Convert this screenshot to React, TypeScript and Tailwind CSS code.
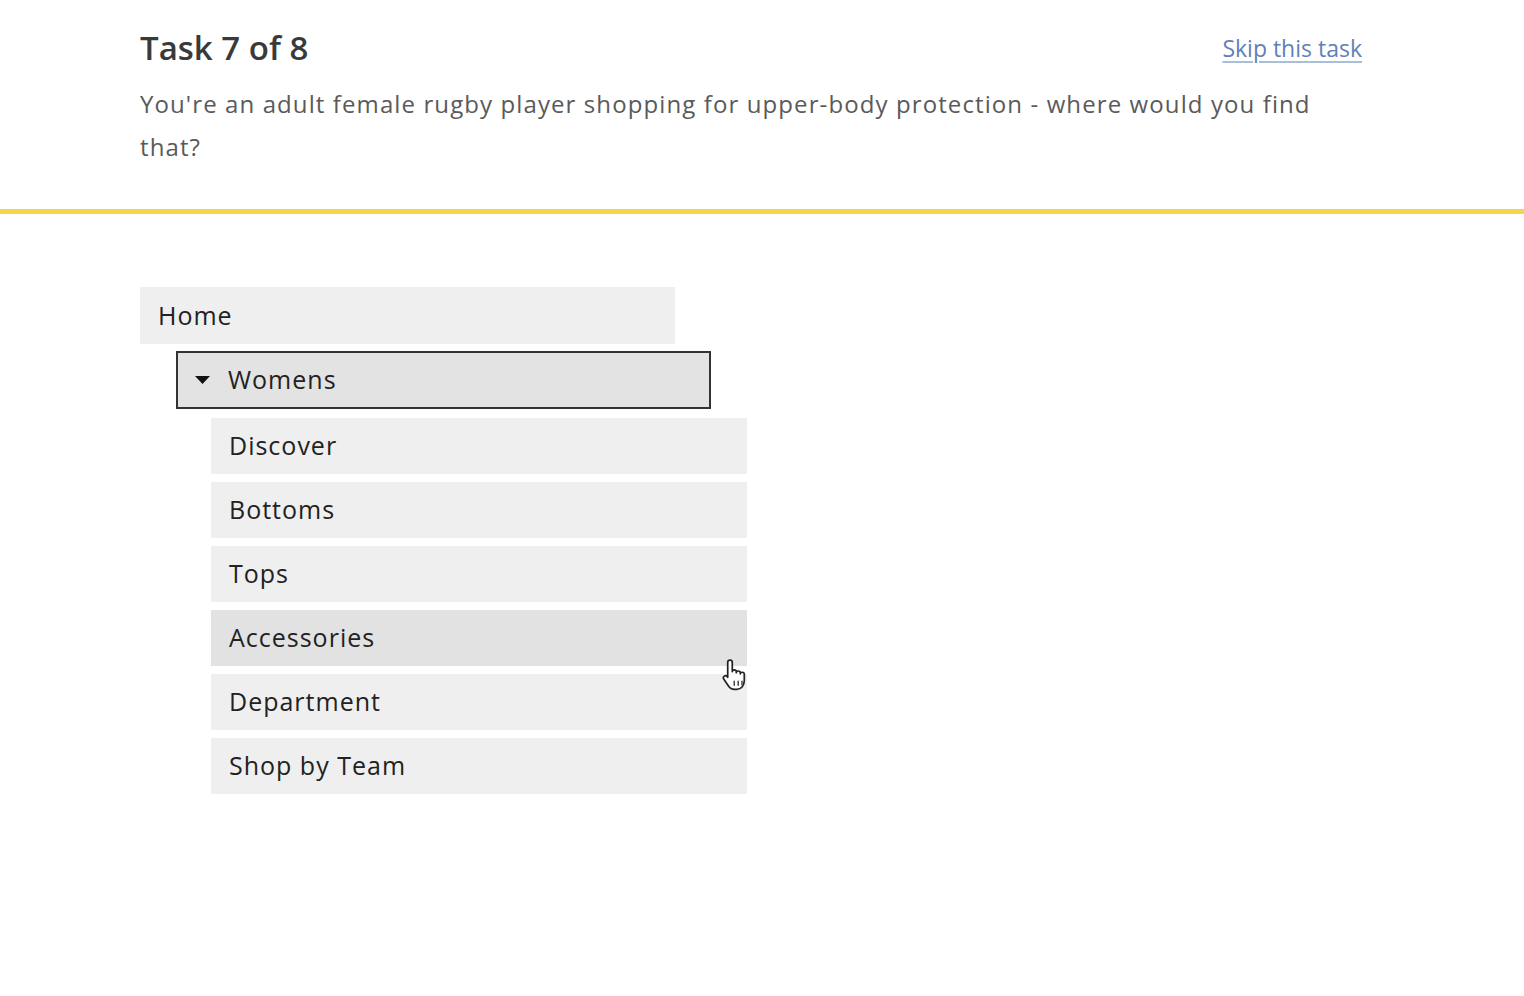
import React from "react";

const children = ["Discover", "Bottoms", "Tops", "Accessories", "Department", "Shop by Team"];

function HandCursor() {
  return (
    <svg width="26" height="32" viewBox="0 0 22 28" className="absolute right-[0px] top-[49px] z-10">
      <path
        d="M7.5 1C8.6 1 9.5 1.9 9.5 3V11C9.5 10 10.3 9.5 11.2 9.5C12.1 9.5 13 10.1 13 11V12C13 11.1 13.8 10.5 14.7 10.5C15.6 10.5 16.5 11.2 16.5 12V13C16.5 12.2 17.3 11.6 18.2 11.6C19.2 11.6 20 12.4 20 13.4V19C20 23 17.5 26.5 13.5 26.5H11.5C9 26.5 7.3 25.3 6 23.4L2 17.5C1.4 16.6 1.6 15.5 2.5 15C3.4 14.4 4.5 14.7 5.1 15.5L5.5 16V3C5.5 1.9 6.4 1 7.5 1Z"
        fill="#fff"
        stroke="#222"
        strokeWidth="1.5"
        strokeLinejoin="round"
      />
      <path d="M11.2 19.5v3.5M14.7 19.5v3.5M18 19.5v3" stroke="#444" strokeWidth="1.3" strokeLinecap="round" />
    </svg>
  );
}

export default function App() {
  return (
    <div className="min-h-screen bg-white" style={{ fontFamily: "'Open Sans', 'Noto Sans', sans-serif" }}>
      {/* Task header */}
      <div className="pl-[140px] pr-[162px] pt-[25px] pb-[41px]">
        <div className="flex items-start justify-between">
          <h1 className="text-[33px] font-semibold leading-[46px] text-[#3a3a3a]">Task 7 of 8</h1>
          <a
            href="#"
            className="mt-[8px] text-[23px] leading-[30px] text-[#5d82b8] underline underline-offset-[4px] decoration-[#a9bedb]"
          >
            Skip this task
          </a>
        </div>
        <p className="mt-[11px] text-[24px] leading-[43px] text-[#5a5a5a] pr-[20px] tracking-[1.1px]">
          You're an adult female rugby player shopping for upper-body protection - where would you find that?
        </p>
      </div>

      <div className="h-[5px] bg-[#f5d54c]" />

      {/* Tree */}
      <div className="pl-[140px] pt-[73px]">
        <div className="flex w-[535px] h-[57px] items-center bg-[#efefef] pl-[18px] text-[25px] tracking-[1px] text-[#222]">
          Home
        </div>

        <div className="ml-[36px] mt-[7px] flex w-[535px] h-[58px] items-center gap-[17px] border-[2.5px] border-[#333] bg-[#e3e3e3] pl-[16px] text-[25px] tracking-[1px] text-[#222]">
          <svg width="17" height="10" viewBox="0 0 17 10">
            <path d="M1 1h15L8.5 9z" fill="#111" />
          </svg>
          <span>Womens</span>
        </div>

        <div className="ml-[71px] mt-[9px] flex flex-col gap-[8px]">
          {children.map((c) => (
            <div
              key={c}
              className={`relative flex w-[536px] h-[56px] items-center pl-[18px] text-[25px] tracking-[1px] text-[#222] ${
                c === "Accessories" ? "bg-[#e2e2e2]" : "bg-[#efefef]"
              }`}
            >
              {c}
              {c === "Accessories" && <HandCursor />}
            </div>
          ))}
        </div>
      </div>
    </div>
  );
}
